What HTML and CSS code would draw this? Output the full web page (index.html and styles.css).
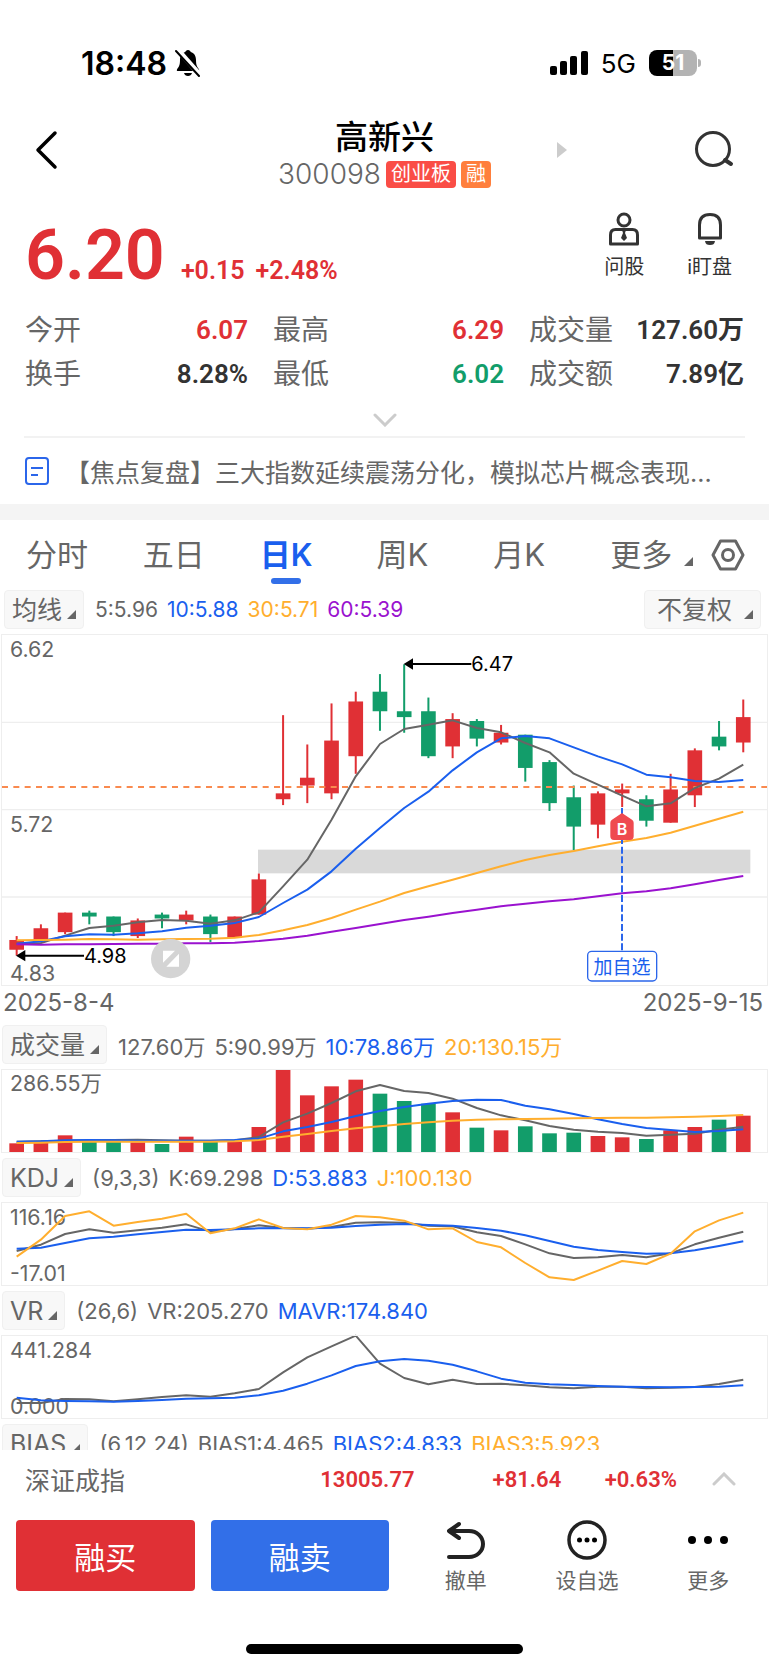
FILE: index.html
```html
<!DOCTYPE html>
<html lang="zh-CN">
<head>
    <meta charset="UTF-8">
    <meta name="viewport" content="width=device-width, initial-scale=1.0">
    <title>高新兴 300098</title>
    <link rel="stylesheet" href="styles.css">
</head>
<body>
<div class="app">
    <div class="statusbar">
        <div class="clock">18:48
            <svg width="26" height="28" viewBox="0 0 26 28">
                <path d="M13 1c-1.500 0-2.500 1-2.700 2C6.500 4 5 7.500 5 11c0 6-1.500 7-3 9.500-.5 1 0 1.500 1 1.500h20c1 0 1.500-.5 1-1.500C22.500 18 21 17 21 11c0-3.500-1.500-7-5.300-8-.2-1-1.200-2-2.700-2zM9 24h8c-.5 2-2 3-4 3s-3.500-1-4-3z"/>
                <path d="M3 1l22 25" stroke="#fff" stroke-width="5"/>
                <path d="M1 2l23 25" stroke="#000" stroke-width="2" stroke-linecap="round"/>
            </svg>
        </div>
        <div class="signal">
            <svg width="38" height="24" viewBox="0 0 38 24">
                <rect x="0" y="15" width="7" height="9" rx="2"/>
                <rect x="10" y="10" width="7" height="14" rx="2"/>
                <rect x="20" y="5" width="7" height="19" rx="2"/>
                <rect x="31" y="0" width="7" height="24" rx="2"/>
            </svg>
            <span class="network">5G</span>
            <div class="battery">51</div>
        </div>
    </div>

    <header class="topbar">
        <button class="icon-btn" aria-label="返回">
            <svg width="24" height="40" viewBox="0 0 24 40"><path d="M21 3L4 20l17 17" fill="none" stroke="#000" stroke-width="3.500" stroke-linecap="round" stroke-linejoin="round"/></svg>
        </button>
        <div class="stock">
            <h1>高新兴</h1>
            <div class="code">300098 <span class="tag board">创业板</span><span class="tag margin">融</span></div>
        </div>
        <button class="icon-btn next" aria-label="下一只">
            <svg width="10" height="16" viewBox="0 0 10 16"><path d="M0 0l10 8-10 8z" fill="#ccc"/></svg>
        </button>
        <button class="icon-btn" aria-label="搜索">
            <svg width="42" height="40" viewBox="0 0 42 40"><circle cx="20" cy="19" r="16.500" fill="none" stroke="#333" stroke-width="3"/><path d="M32 30l6 4" stroke="#333" stroke-width="4" stroke-linecap="round"/></svg>
        </button>
    </header>

    <section class="quote">
        <div class="price up">6.20</div>
        <div class="change up"><span>+0.15</span><span>+2.48%</span></div>
        <div class="tools">
            <button>
                <svg width="32" height="34" viewBox="0 0 32 34" fill="none" stroke="#333" stroke-width="3"><circle cx="16" cy="8" r="6"/><path d="M2.500 32v-9c0-4 2-5.500 5-5.500h17c3 0 5 1.500 5 5.500v9z" stroke-linejoin="round"/><path d="M14 18h4l-1 3 2 5-3 3-3-3 2-5z" fill="#333" stroke="none"/></svg>
                问股
            </button>
            <button>
                <svg width="28" height="34" viewBox="0 0 28 34" fill="none" stroke="#333" stroke-width="3"><path d="M3.500 26V13c0-7 4-10.500 10.500-10.500S24.500 6 24.500 13v13z" stroke-linejoin="round"/><path d="M9 29h10c-.5 3-2 4-5 4s-4.500-1-5-4z" fill="#333" stroke="none"/></svg>
                i盯盘
            </button>
        </div>
    </section>

    <dl class="stats">
        <div><dt>今开</dt><dd class="up">6.07</dd></div>
        <div><dt>最高</dt><dd class="up">6.29</dd></div>
        <div><dt>成交量</dt><dd>127.60万</dd></div>
        <div><dt>换手</dt><dd>8.28%</dd></div>
        <div><dt>最低</dt><dd class="down">6.02</dd></div>
        <div><dt>成交额</dt><dd>7.89亿</dd></div>
    </dl>
    <button class="expand" aria-label="展开">
        <svg width="24" height="14" viewBox="0 0 24 14"><path d="M2 2l10 10L22 2" fill="none" stroke="#ccc" stroke-width="3" stroke-linecap="round"/></svg>
    </button>

    <a class="news" href="#">
        <svg width="24" height="28" viewBox="0 0 24 28" fill="none" stroke="#2b66ea" stroke-width="2"><rect x="1" y="1" width="22" height="26" rx="3"/><path d="M6 11h12M6 18h7"/></svg>
        <span>【焦点复盘】三大指数延续震荡分化，模拟芯片概念表现...</span>
    </a>

    <nav class="tabs">
        <button>分时</button>
        <button>五日</button>
        <button class="active">日K</button>
        <button>周K</button>
        <button>月K</button>
        <button>更多<i class="corner"></i></button>
        <button class="setting" aria-label="设置">
            <svg width="34" height="32" viewBox="0 0 34 32" fill="none" stroke="#666" stroke-width="3"><path d="M9.500 2h15L32 16l-7.500 14h-15L2 16z" stroke-linejoin="round"/><circle cx="17" cy="16" r="5.500"/></svg>
        </button>
    </nav>

    <main class="charts">
        <div class="legend main-legend">
            <button class="pick">均线<i class="corner"></i></button>
            <span>5:5.96</span><span class="blue">10:5.88</span><span class="orange">30:5.71</span><span class="purple">60:5.39</span>
            <button class="pick adjust">不复权<i class="corner"></i></button>
        </div>
        <!-- chart units: 3 per css pixel at 769 wide -->
        <svg class="chart" id="kline" viewBox="6 16 2295 1050">
            <path class="grid" d="M6 278H2301M6 540H2301M6 802H2301"/>
            <rect x="774" y="660" width="1477" height="71" fill="#d9d9d9"/>
            <g id="candles"></g>
            <path d="M6 472H2301" stroke="#f98a4f" stroke-width="6" stroke-dasharray="18 16"/>
            <g id="ma"></g>
            <text x="30" y="82">6.62</text>
            <text x="30" y="607">5.72</text>
            <text x="30" y="1053">4.83</text>
            <g class="peak">
                <path d="M60 978H252" stroke="#000" stroke-width="6"/><path d="M48 978l28-17v34z"/>
                <text x="252" y="999">4.98</text>
                <path d="M1224 103H1414" stroke="#000" stroke-width="6"/><path d="M1211 103l28-17v34z"/>
                <text x="1414" y="125">6.47</text>
            </g>
            <g>
                <circle cx="512" cy="987" r="59" fill="#d4d4d4"/>
                <path d="M489 963h36l-36 36zM537 972v39h-38z" fill="#fff"/>
            </g>
            <path d="M1866 535V965" stroke="#2b66ea" stroke-width="6" stroke-dasharray="21 8"/>
            <path d="M1866 550l30 20q5 3 5 9v41q0 11-11 11h-48q-11 0-11-11v-41q0-6 5-9z" fill="#ef4a50"/>
            <text class="mark" x="1866" y="617">B</text>
            <rect x="1763" y="965" width="207" height="89" rx="12" fill="#fff" stroke="#2b66ea" stroke-width="4"/>
            <text class="watch" x="1866" y="1032">加自选</text>
        </svg>
        <div class="dates"><span>2025-8-4</span><span>2025-9-15</span></div>

        <div class="legend">
            <button class="pick">成交量<i class="corner"></i></button>
            <span>127.60万</span><span>5:90.99万</span><span class="blue">10:78.86万</span><span class="orange">20:130.15万</span>
        </div>
        <svg class="chart" id="volume" viewBox="6 179 2295 246">
            <text x="30" y="243">286.55万</text>
        </svg>

        <div class="legend">
            <button class="pick">KDJ<i class="corner"></i></button>
            <span>(9,3,3)</span><span>K:69.298</span><span class="blue">D:53.883</span><span class="orange">J:100.130</span>
        </div>
        <svg class="chart" id="kdj" viewBox="6 580 2295 246">
            <text x="30" y="645">116.16</text>
            <text x="30" y="815">-17.01</text>
        </svg>

        <div class="legend">
            <button class="pick">VR<i class="corner"></i></button>
            <span>(26,6)</span><span>VR:205.270</span><span class="blue">MAVR:174.840</span>
        </div>
        <svg class="chart" id="vr" viewBox="6 172 2295 246">
            <text x="30" y="237">441.284</text>
            <text x="30" y="407">0.000</text>
        </svg>

        <div class="legend">
            <button class="pick">BIAS<i class="corner"></i></button>
            <span>(6,12,24)</span><span>BIAS1:4.465</span><span class="blue">BIAS2:4.833</span><span class="orange">BIAS3:5.923</span>
        </div>
    </main>

    <footer>
        <div class="index">
            <span class="name">深证成指</span>
            <span class="point up">13005.77</span>
            <span class="diff up">+81.64</span>
            <span class="rate up">+0.63%</span>
            <svg width="24" height="14" viewBox="0 0 24 14"><path d="M2 12L12 2l10 10" fill="none" stroke="#ccc" stroke-width="3" stroke-linecap="round"/></svg>
        </div>
        <div class="actions">
            <button class="trade buy">融买</button>
            <button class="trade sell">融卖</button>
            <button class="act">
                <svg width="40" height="40" viewBox="0 0 40 40" fill="none" stroke="#222" stroke-width="4" stroke-linecap="round" stroke-linejoin="round"><path d="M3 11h20c8 0 14 6 14 13s-6 13-14 13H3M13 4L3 11l10 7"/></svg>
                撤单
            </button>
            <button class="act">
                <svg width="40" height="40" viewBox="0 0 40 40"><circle cx="20" cy="20" r="18" fill="none" stroke="#222" stroke-width="3.500"/><circle cx="12.500" cy="20" r="2.500"/><circle cx="20" cy="20" r="2.500"/><circle cx="27.500" cy="20" r="2.500"/></svg>
                设自选
            </button>
            <button class="act">
                <svg width="40" height="40" viewBox="0 0 40 40"><circle cx="4" cy="20" r="4"/><circle cx="20" cy="20" r="4"/><circle cx="36" cy="20" r="4"/></svg>
                更多
            </button>
        </div>
        <div class="home"></div>
    </footer>
</div>
<script src="chart.js"></script>
</body>
</html>
```
FILE: styles.css
```css
* {
    box-sizing: border-box;
}

body {
    margin: 0;
    background: #fff;
    color: #333;
    font-family: Inter, "Noto Sans CJK SC", sans-serif;
}

h1, dl, dd {
    margin: 0;
}

button {
    border: 0;
    padding: 0;
    background: none;
    color: inherit;
    font: inherit;
}

svg {
    display: block;
    flex: none;
}

.up { color: #e03035; }
.down { color: #129d6a; }
.blue { color: #1a5fee; }
.orange { color: #ffae2e; }
.purple { color: #9a12cf; }

.app {
    display: flex;
    flex-direction: column;
    height: 100vh;
    overflow: hidden;
}

.app > * {
    flex: none;
}

/* status bar */
.statusbar {
    display: flex;
    justify-content: space-between;
    align-items: center;
    padding: 42px 72px 0 81px;
    height: 84px;
    color: #000;
}

.clock {
    display: flex;
    align-items: center;
    gap: 8px;
    font-size: 32px;
    font-weight: 600;
}

.signal {
    display: flex;
    align-items: center;
    gap: 13px;
}

.network {
    font-size: 26px;
}

.battery {
    position: relative;
    width: 48px;
    height: 26px;
    border-radius: 8px;
    background: linear-gradient(90deg, #000 51%, #b3b3b3 51%);
    color: #fff;
    font-size: 21px;
    font-weight: 700;
    line-height: 26px;
    text-align: center;
}

.battery::after {
    content: "";
    position: absolute;
    left: 49px;
    top: 9px;
    width: 3px;
    height: 8px;
    border-radius: 0 3px 3px 0;
    background: #b3b3b3;
}

/* title */
.topbar {
    display: grid;
    grid-template-columns: 170px 1fr 170px;
    align-items: center;
    padding: 32px 34px 0;
    height: 108px;
}

.topbar .icon-btn {
    justify-self: start;
    padding-bottom: 8px;
}

.topbar .icon-btn:last-child {
    justify-self: end;
}

.topbar .next {
    position: absolute;
    left: 73%;
    margin-left: -4px;
}

.stock {
    text-align: center;
}

.stock h1 {
    color: #000;
    font-size: 33px;
    font-weight: 500;
    line-height: 40px;
}

.code {
    display: flex;
    justify-content: center;
    align-items: center;
    gap: 5px;
    color: #666;
    font-size: 28px;
    font-weight: 300;
    line-height: 34px;
}

.tag {
    padding: 0 5px;
    border-radius: 4px;
    color: #fff;
    font-size: 20px;
    font-weight: 400;
    line-height: 27px;
}

.board { background: #fa4d46; }
.margin { background: #ff7f3d; }

/* price */
.quote {
    display: flex;
    align-items: baseline;
    padding: 20px 37px 0 25px;
    height: 96px;
}

.price, .change, .stats dd, .index .up {
    font-family: Roboto, "Noto Sans CJK SC", sans-serif;
    font-weight: 600;
}

.price {
    font-size: 70px;
    line-height: 86px;
}

.change {
    display: flex;
    gap: 11px;
    padding-left: 16px;
    font-size: 25px;
}

.tools {
    display: flex;
    gap: 43px;
    margin-left: auto;
    align-self: flex-start;
}

.tools button {
    display: flex;
    flex-direction: column;
    align-items: center;
    gap: 8px;
    font-size: 20px;
    line-height: 26px;
}

.stats {
    display: grid;
    grid-template-columns: 223fr 231fr 215fr;
    gap: 4px 25px;
    padding: 22px 25px 0;
}

.stats div {
    display: flex;
    justify-content: space-between;
    align-items: center;
}

.stats dt {
    color: #666;
    font-size: 28px;
    line-height: 40px;
}

.stats dd {
    font-size: 26px;
    line-height: 40px;
}

.expand {
    display: flex;
    justify-content: center;
    margin: 0 24px;
    padding: 19px 0 9px;
    border-bottom: 2px solid #f2f2f2;
}

.news {
    display: flex;
    align-items: center;
    gap: 16px;
    height: 82px;
    padding: 0 25px;
    border-bottom: 16px solid #f4f4f4;
    color: #666;
    font-size: 25px;
    text-decoration: none;
    white-space: nowrap;
}

/* period tabs */
.tabs {
    display: grid;
    grid-template-columns: repeat(5, 117fr) 101fr 34px;
    justify-items: start;
    padding: 0 24px 0 26px;
    height: 70px;
    color: #666;
    font-size: 31px;
}

.tabs button {
    position: relative;
    padding-bottom: 6px;
}

.tabs .setting {
    padding-bottom: 0;
}

.tabs .active {
    color: #1a5fee;
    font-weight: 600;
}

.tabs .active::after {
    content: "";
    position: absolute;
    left: 50%;
    bottom: 6px;
    width: 30px;
    height: 6px;
    margin-left: -15px;
    border-radius: 3px;
    background: #326fe8;
}

.corner {
    display: inline-block;
    margin-left: 12px;
    border-left: 9px solid transparent;
    border-bottom: 9px solid #666;
}

/* charts */
.charts {
    flex: 1 1 0;
    min-height: 0;
    overflow: hidden;
    padding: 0 2px;
    color: #666;
}

.legend {
    display: flex;
    align-items: center;
    gap: 9px;
    height: 39px;
    margin: 6px 0;
    font-size: 22px;
    white-space: nowrap;
}

.main-legend {
    margin: 0 6px 6px 2px;
    font-size: 21px;
}

.pick {
    height: 39px;
    padding: 0 7px;
    margin-right: 2px;
    border: 1px solid #f0f0f0;
    border-radius: 4px;
    background: #f8f8f8;
    font-size: 25px;
    line-height: 34px;
}

.pick .corner {
    margin-left: 5px;
}

.adjust {
    margin: 0 0 0 auto;
    padding-left: 12px;
}

.adjust .corner {
    margin-left: 12px;
}

.chart {
    width: 100%;
    height: auto;
    outline: 1px solid #eee;
    overflow: visible;
}

.chart text {
    fill: #666;
    font-size: 64px;
}

.grid {
    stroke: #eee;
    stroke-width: 4;
}

.chart .peak text {
    fill: #000;
    font-size: 60px;
}

.chart .mark {
    fill: #fff;
    font-size: 48px;
    font-weight: 600;
    text-anchor: middle;
}

.chart .watch {
    fill: #1a5fee;
    font-size: 57px;
    text-anchor: middle;
}

.line {
    fill: none;
    stroke-width: 6;
    stroke-linejoin: round;
}

.dates {
    display: flex;
    justify-content: space-between;
    height: 34px;
    padding: 0 4px 0 1px;
    font-size: 24px;
    line-height: 36px;
}

/* bottom */
.index {
    display: flex;
    align-items: center;
    height: 58px;
    padding: 0 33px 0 25px;
    color: #666;
    font-size: 25px;
}

.index .up {
    font-size: 22px;
    text-align: right;
}

.point { flex: 240 1 0; }
.diff { flex: 147 1 0; }
.rate { flex: 116 1 0; }

.index .name {
    width: 150px;
}

.index svg {
    margin-left: 35px;
}

.actions {
    display: flex;
    align-items: flex-start;
    padding: 12px 0 0 16px;
}

.trade {
    flex: 178 1 0;
    height: 71px;
    margin-right: 16px;
    border-radius: 4px;
    color: #fff;
    font-size: 31px;
}

.buy { background: #e03035; }
.sell { background: #326fe8; }

.act {
    display: flex;
    flex-direction: column;
    align-items: center;
    flex: 121 1 0;
    gap: 6px;
    color: #666;
    font-size: 21px;
    line-height: 30px;
}

.home {
    width: 36%;
    height: 10px;
    margin: 48px auto 16px;
    border-radius: 5px;
    background: #000;
}
```
FILE: chart.js
```js
const RED = '#e03035';
const GREEN = '#129d6a';
const GRAY = '#666';
const BLUE = '#1a5fee';
const ORANGE = '#ffae2e';
const PURPLE = '#9a12cf';

// open, close, high, low
const days = [
    [5.01, 5.06, 5.08, 4.98], [5.06, 5.12, 5.14, 5.06], [5.10, 5.20, 5.20, 5.09],
    [5.20, 5.18, 5.21, 5.14], [5.18, 5.10, 5.18, 5.08], [5.08, 5.16, 5.17, 5.07],
    [5.19, 5.17, 5.20, 5.12], [5.16, 5.19, 5.21, 5.14], [5.18, 5.09, 5.19, 5.05],
    [5.07, 5.18, 5.18, 5.07], [5.19, 5.37, 5.40, 5.19], [5.78, 5.81, 6.21, 5.75],
    [5.85, 5.89, 6.06, 5.76], [5.81, 6.08, 6.27, 5.78], [6.00, 6.28, 6.33, 5.91],
    [6.33, 6.23, 6.42, 6.13], [6.23, 6.20, 6.47, 6.12], [6.23, 6.00, 6.30, 5.99],
    [6.05, 6.19, 6.22, 5.99], [6.18, 6.09, 6.19, 6.05], [6.07, 6.12, 6.16, 6.06],
    [6.11, 5.94, 6.11, 5.87], [5.97, 5.76, 5.98, 5.72], [5.79, 5.64, 5.85, 5.52],
    [5.65, 5.81, 5.82, 5.58], [5.81, 5.83, 5.86, 5.74], [5.78, 5.67, 5.80, 5.64],
    [5.66, 5.83, 5.91, 5.66], [5.80, 6.03, 6.04, 5.74], [6.10, 6.05, 6.18, 6.03],
    [6.07, 6.20, 6.29, 6.02]
];

// bar tops of the volume panel, 425 is the base line
const volume = [399, 398, 375, 394, 394, 396, 401, 379, 395, 395, 350, 179, 255, 228, 208, 250, 272, 280, 306, 352, 360, 348, 369, 367, 377, 381, 386, 360, 350, 328, 316];

const lines = {
    ma: [
        [GRAY, [942, 940, 918, 895, 888, 878, 871, 873, 882, 872, 848, 770, 690, 570, 440, 343, 298, 285, 272, 295, 308, 340, 368, 432, 465, 498, 530, 521, 475, 447, 405]],
        [BLUE, [942, 935, 920, 914, 915, 911, 905, 894, 888, 880, 862, 820, 780, 725, 657, 595, 535, 486, 422, 368, 326, 319, 326, 353, 380, 404, 435, 443, 454, 457, 451]],
        [ORANGE, [932, 931, 930, 928, 929, 930, 929, 928, 927, 924, 916, 902, 886, 865, 840, 816, 790, 770, 750, 730, 710, 691, 676, 664, 650, 636, 625, 609, 588, 567, 546]],
        [PURPLE, [944, 945, 944, 944, 943, 942, 942, 941, 941, 939, 934, 927, 918, 906, 895, 883, 871, 861, 850, 840, 830, 822, 815, 809, 800, 791, 785, 776, 764, 751, 739]]
    ],
    volume: [
        [GRAY, [394, 393, 391, 390, 389, 388, 390, 391, 391, 390, 380, 336, 310, 278, 243, 224, 242, 248, 265, 293, 315, 330, 347, 358, 364, 368, 376, 373, 370, 358, 349]],
        [BLUE, [394, 393, 390, 389, 390, 391, 391, 391, 391, 389, 385, 363, 350, 335, 317, 302, 290, 280, 272, 268, 269, 286, 297, 311, 327, 341, 353, 359, 365, 362, 357]],
        [ORANGE, [398, 397, 395, 394, 394, 394, 394, 394, 394, 393, 389, 379, 371, 362, 354, 348, 341, 336, 331, 328, 327, 326, 325, 324, 323, 322, 322, 321, 319, 317, 314]]
    ],
    kdj: [
        [GRAY, [724, 705, 673, 659, 669, 662, 654, 644, 666, 658, 647, 655, 657, 652, 639, 638, 639, 648, 650, 668, 679, 704, 731, 745, 743, 736, 743, 731, 704, 684, 666]],
        [BLUE, [717, 714, 700, 686, 681, 674, 667, 660, 661, 659, 656, 655, 656, 654, 649, 645, 643, 646, 648, 655, 663, 677, 694, 711, 721, 727, 732, 731, 722, 709, 695]],
        [ORANGE, [741, 690, 619, 605, 648, 637, 627, 612, 671, 656, 629, 655, 659, 645, 619, 623, 633, 659, 656, 697, 713, 760, 803, 811, 783, 754, 763, 732, 665, 632, 609]]
    ],
    vr: [
        [GRAY, [373, 373, 361, 362, 368, 362, 355, 350, 354, 344, 331, 281, 236, 203, 171, 255, 298, 317, 303, 316, 315, 320, 326, 329, 324, 324, 329, 327, 325, 316, 303]],
        [BLUE, [357, 365, 367, 368, 369, 367, 364, 360, 359, 357, 350, 336, 315, 290, 262, 248, 241, 246, 258, 278, 300, 312, 317, 319, 322, 324, 325, 326, 325, 324, 320]]
    ]
};

function add(parent, name, attrs) {
    const el = document.createElementNS('http://www.w3.org/2000/svg', name);
    for (const key in attrs) el.setAttribute(key, attrs[key]);
    parent.appendChild(el);
}

function xOf(i) {
    return 50 + i * 72.66;
}

function yOf(price) {
    return 16 + (6.62 - price) * 586.5;
}

const candles = document.getElementById('candles');
const volumePanel = document.getElementById('volume');

days.forEach(([open, close, high, low], i) => {
    const color = close >= open ? RED : GREEN;
    const top = yOf(Math.max(open, close));
    const bottom = yOf(Math.min(open, close));
    add(candles, 'rect', { x: xOf(i) - 3, y: yOf(high), width: 6, height: yOf(low) - yOf(high), fill: color });
    add(candles, 'rect', { x: xOf(i) - 22, y: top, width: 44, height: bottom - top, fill: color });
    add(volumePanel, 'rect', { x: xOf(i) - 22, y: volume[i], width: 44, height: 425 - volume[i], fill: color });
});

for (const id in lines) {
    const panel = document.getElementById(id);
    lines[id].forEach(([color, values]) => {
        const points = values.map((y, i) => xOf(i) + ',' + y).join(' ');
        add(panel, 'polyline', { class: 'line', points: points, stroke: color });
    });
}
```
